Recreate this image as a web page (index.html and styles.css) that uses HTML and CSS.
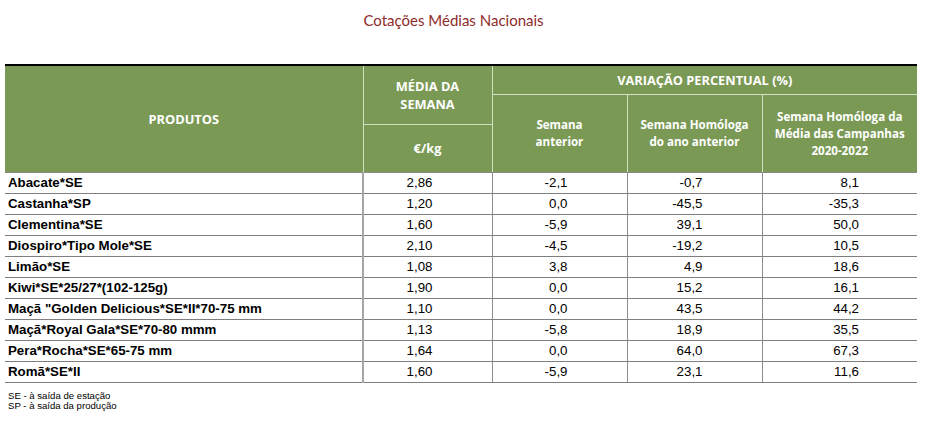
FILE: index.html
```html
<!DOCTYPE html>
<html lang="pt">
<head>
<meta charset="utf-8">
<title>Cotações Médias Nacionais</title>
<link rel="stylesheet" href="styles.css">
</head>
<body>
<h1 class="title">Cotações Médias Nacionais</h1>
<table class="prices">
  <colgroup>
    <col class="c-prod">
    <col class="c-media">
    <col class="c-v1">
    <col class="c-v2">
    <col class="c-v3">
  </colgroup>
  <thead>
    <tr class="h1">
      <th rowspan="3" class="prod">PRODUTOS</th>
      <th rowspan="2" class="media">MÉDIA DA<br>SEMANA</th>
      <th colspan="3" class="var">VARIAÇÃO PERCENTUAL (%)</th>
    </tr>
    <tr class="h2">
      <th rowspan="2" class="sub">Semana<br>anterior</th>
      <th rowspan="2" class="sub">Semana Homóloga<br>do ano anterior</th>
      <th rowspan="2" class="sub last">Semana Homóloga da<br>Média das Campanhas<br>2020-2022</th>
    </tr>
    <tr class="h3">
      <th class="unit">€/kg</th>
    </tr>
  </thead>
  <tbody>
    <tr><td>Abacate*SE</td><td>2,86</td><td>-2,1</td><td>-0,7</td><td>8,1</td></tr>
    <tr><td>Castanha*SP</td><td>1,20</td><td>0,0</td><td>-45,5</td><td>-35,3</td></tr>
    <tr><td>Clementina*SE</td><td>1,60</td><td>-5,9</td><td>39,1</td><td>50,0</td></tr>
    <tr><td>Diospiro*Tipo Mole*SE</td><td>2,10</td><td>-4,5</td><td>-19,2</td><td>10,5</td></tr>
    <tr><td>Limão*SE</td><td>1,08</td><td>3,8</td><td>4,9</td><td>18,6</td></tr>
    <tr><td>Kiwi*SE*25/27*(102-125g)</td><td>1,90</td><td>0,0</td><td>15,2</td><td>16,1</td></tr>
    <tr><td>Maçã "Golden Delicious*SE*II*70-75 mm</td><td>1,10</td><td>0,0</td><td>43,5</td><td>44,2</td></tr>
    <tr><td>Maçã*Royal Gala*SE*70-80 mmm</td><td>1,13</td><td>-5,8</td><td>18,9</td><td>35,5</td></tr>
    <tr><td>Pera*Rocha*SE*65-75 mm</td><td>1,64</td><td>0,0</td><td>64,0</td><td>67,3</td></tr>
    <tr><td>Romã*SE*II</td><td>1,60</td><td>-5,9</td><td>23,1</td><td>11,6</td></tr>
  </tbody>
</table>
<div class="notes">
  <p>SE - à saída de estação</p>
  <p>SP - à saída da produção</p>
</div>
</body>
</html>
```

FILE: styles.css
```css
html, body {
  margin: 0;
  padding: 0;
  background: #ffffff;
}

body {
  width: 937px;
  height: 421px;
  overflow: hidden;
  font-family: "Liberation Sans", Arial, sans-serif;
}

.title {
  margin: 0;
  height: 64px;
  box-sizing: border-box;
  padding: 10px 30px 0 0;
  text-align: center;
  font-family: Lato, "Open Sans", sans-serif;
  font-weight: 400;
  font-size: 15px;
  line-height: 20px;
  color: #8e2b2b;
}

.prices {
  margin-left: 5px;
  width: 912px;
  border-collapse: collapse;
  table-layout: fixed;
}

.c-prod { width: 358px; }
.c-media { width: 129px; }
.c-v1 { width: 135px; }
.c-v2 { width: 135px; }
.c-v3 { width: 155px; }

.prices th {
  background: #7a9955;
  color: #ffffff;
  font-family: "Open Sans", Lato, sans-serif;
  font-weight: 700;
  font-size: 12.8px;
  line-height: 18px;
  text-align: center;
  vertical-align: middle;
  padding: 0;
  border: 1px solid #d3dfc3;
  border-bottom-color: #8a8a8a;
}

.prices th.sub {
  font-size: 11.6px;
  line-height: 17px;
}

.prices .h1 th {
  border-top: 2px solid #000000;
}

.prices th.prod { border-left: none; }
.prices th.var,
.prices th.last { border-right: none; }
.prices th.media { border-bottom-color: #d3dfc3; }
.prices th.var { border-bottom-color: #d3dfc3; }

.prices .h1 { height: 29px; }
.prices .h2 { height: 30px; }
.prices .h3 { height: 48px; }

.prices td {
  height: 20px;
  padding: 0 59px 0 0;
  font-size: 13.3px;
  line-height: 15px;
  color: #000000;
  text-align: right;
  vertical-align: middle;
  border-bottom: 1px solid #7f7f7f;
  border-right: 1px solid #8c8c8c;
}

.prices td:first-child {
  padding: 0 0 0 3px;
  text-align: left;
  font-weight: 700;
  border-right: 2px solid #a6a6a6;
}

.prices td:last-child {
  border-right: none;
  padding-right: 58px;
}

.notes {
  padding: 8px 0 0 8px;
  font-size: 9.6px;
  line-height: 10px;
  color: #000000;
}

.notes p {
  margin: 0;
}
```
